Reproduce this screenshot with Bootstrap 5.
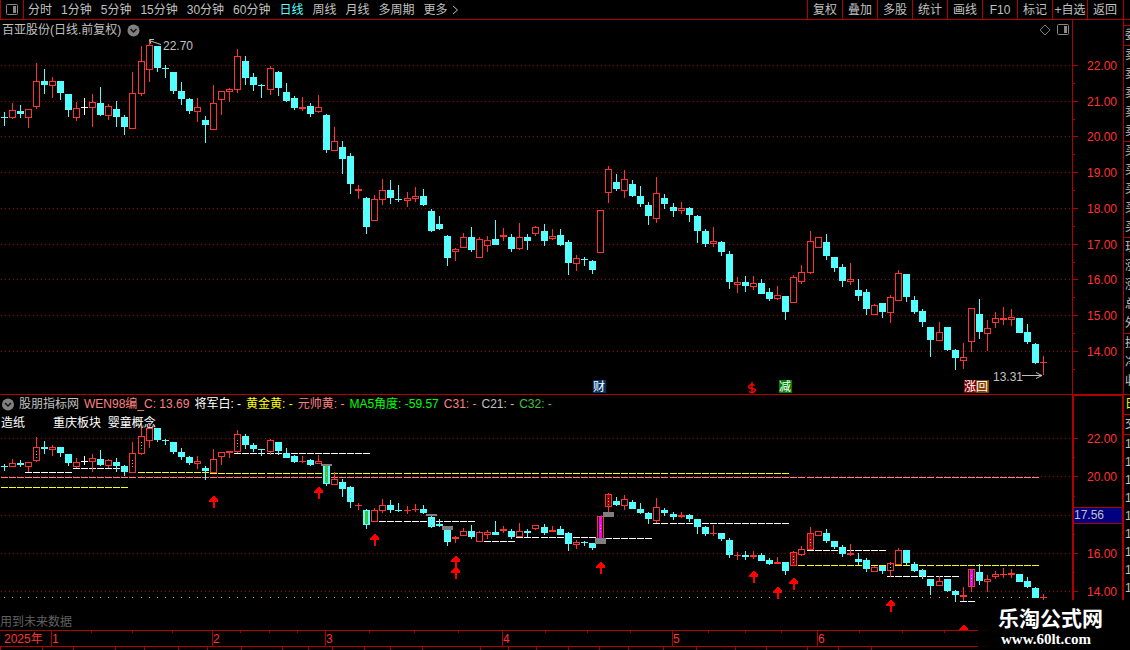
<!DOCTYPE html>
<html lang="zh-CN">
<head>
<meta charset="utf-8">
<meta name="viewport" content="width=device-width, initial-scale=1">
<title>百亚股份 日线</title>
<link href="https://cdn.jsdelivr.net/npm/bootstrap@5.3.0/dist/css/bootstrap.min.css" rel="stylesheet">
<style>
:root { --line: #b00000; --tick: #ff3232; --ink: #c0c0c0; }
body { background: #000; color: var(--ink); font: 12px/18px "Liberation Sans", "Noto Sans CJK SC", sans-serif; }
.toolbar { height: 20px; border-bottom: 1px solid var(--line); padding-right: 8px; }
.toolbar button { background: none; border: 0; padding: 0; color: inherit; line-height: 18px; white-space: nowrap; }
.toolbar .period { gap: 9px; }
.toolbar .period .current { color: #54ffff; }
.toolbar .tool { width: 35px; border-left: 1px solid var(--line); height: 19px; }
.toolbar .panes { width: 24px; height: 19px; border: solid var(--line); border-width: 0 1px; margin-right: 4px; }
.toolbar .panes svg, .pane-head svg { display: block; }
.plot { display: block; width: 100%; height: auto; }
.pane-head { top: 0; left: 0; right: 53px; height: 20px; padding-left: 2px; white-space: nowrap; }
.pane-head button { background: none; border: 0; padding: 0; }
.pane-head .toggle { margin-left: 6px; }
.readout { gap: 5px; }
.tags { top: 20px; left: 1px; white-space: nowrap; color: #fff; }
.tags .first { margin-right: 28px; }
.note { left: 0; bottom: 0; color: #606060; line-height: 16px; }
.strip { width: 7px; border-left: 1px solid var(--line); flex: none; padding-top: 25px; margin-top: -20px; }
.strip div { border-top: 1px solid var(--line); width: 7px; overflow: hidden; padding-left: 1px; }
.strip span { display: block; line-height: 19px; width: 12px; }
.strip .totals { height: 61px; }
.strip .bids span { line-height: 18px; }
.sitemark { right: 0; bottom: 0; width: 152px; height: 50px; background: #000; padding: 5px 0 0 20px; }
.sitemark .cn { font: 700 21px/25px "Noto Sans CJK SC", sans-serif; color: #fff; }
.sitemark .site { font: 700 15px/18px "Liberation Serif", serif; color: #fff; text-decoration: none; padding-left: 3px; }
.c-pink { color: #ff8080; } .c-yellow { color: #ff0; } .c-lime { color: #0f0; } .c-green { color: #40c040; } .c-white { color: #fff; }
svg text { font: 12px "Liberation Sans", "Noto Sans CJK SC", sans-serif; }
</style>
<script src="https://cdn.jsdelivr.net/npm/bootstrap@5.3.0/dist/js/bootstrap.bundle.min.js"></script>
</head>
<body>
<div class="position-relative overflow-hidden">
  <nav class="toolbar d-flex">
    <button class="panes d-flex align-items-center justify-content-center" aria-label="侧栏">
      <svg width="12" height="12"><rect x=".5" y=".5" width="11" height="10" rx="1" fill="none" stroke="#888"/><rect x="7" y="2" width="3" height="7" fill="#888"/></svg>
    </button>
    <div class="period d-flex flex-grow-1">
      <button>分时</button><button>1分钟</button><button>5分钟</button><button>15分钟</button><button>30分钟</button><button>60分钟</button><button class="current">日线</button><button>周线</button><button>月线</button><button>多周期</button><button class="d-flex align-items-center">更多<svg class="ms-1" width="7" height="10"><path d="M1 1L5.500 5L1 9" fill="none" stroke="#c0c0c0"/></svg></button>
    </div>
    <div class="d-flex flex-shrink-0">
      <button class="tool">复权</button><button class="tool">叠加</button><button class="tool">多股</button><button class="tool">统计</button><button class="tool">画线</button><button class="tool">F10</button><button class="tool">标记</button><button class="tool">+自选</button><button class="tool">返回</button>
    </div>
  </nav>
  <div class="d-flex">
    <main class="flex-grow-1">
      <section class="position-relative">
        <svg class="plot" id="price" viewBox="0 20 1123 374"></svg>
        <div class="pane-head position-absolute d-flex align-items-center">
          <span>百亚股份(日线.前复权)</span>
          <button class="toggle" aria-label="展开"><svg width="13" height="13"><circle cx="6.500" cy="6.500" r="6" fill="#808080"/><path d="M3.500 5L6.500 8L9.500 5" fill="none" stroke="#111" stroke-width="1.500"/></svg></button>
          <button class="ms-auto" aria-label="标记点"><svg width="12" height="12"><path d="M6 1L11 6L6 11L1 6Z" fill="none" stroke="#777"/></svg></button>
          <button class="toggle" aria-label="窗格"><svg width="13" height="12"><rect x=".5" y=".5" width="11" height="10" rx="1" fill="none" stroke="#888"/><rect x="7" y="2" width="3" height="7" fill="#888"/></svg></button>
        </div>
      </section>
      <section class="position-relative">
        <svg class="plot" id="signal" viewBox="0 394 1123 236"></svg>
        <div class="pane-head readout position-absolute d-flex align-items-center">
          <button aria-label="展开"><svg width="12" height="13"><circle cx="6" cy="6.500" r="6" fill="#808080"/><path d="M3 5L6 8L9 5" fill="none" stroke="#111" stroke-width="1.500"/></svg></button>
          <span>股朋指标网</span><span class="c-pink">WEN98编_C: 13.69</span><span class="c-white">将军白: -</span><span class="c-yellow">黄金黄: -</span><span class="c-pink">元帅黄: -</span><span class="c-lime">MA5角度: -59.57</span><span class="c-pink">C31: -</span><span>C21: -</span><span class="c-green">C32: -</span>
        </div>
        <div class="tags position-absolute"><span class="first">造纸</span><span>重庆板块</span>&nbsp; <span>婴童概念</span></div>
        <div class="note position-absolute">用到未来数据</div>
      </section>
      <svg class="plot" id="dates" viewBox="0 630 1123 20"></svg>
    </main>
    <aside class="strip">
      <div><span>委</span></div>
      <div><span>卖</span><span>卖</span><span>卖</span><span>卖</span><span>卖</span></div>
      <div><span>买</span><span>买</span><span>买</span><span>买</span><span>买</span></div>
      <div><span>现</span><span>涨</span><span>涨</span><span>总</span><span>外</span></div>
      <div class="totals"><span>换</span><span>净</span><span>收</span></div>
      <div class="c-yellow"><span>日</span></div>
      <div><span>交</span></div>
      <div class="bids"><span>1</span><span>1</span><span>1</span><span>1</span><span>1</span><span>1</span><span>1</span><span>1</span><span>1</span></div>
    </aside>
  </div>
  <div class="sitemark position-absolute">
    <div class="cn">乐淘公式网</div>
    <a class="site d-block" href="#">www.60lt.com</a>
  </div>
</div>
<script>
// Each candle: high, body top, body bottom, low (plot rows); u = up, d = down, w = flat.
const candles = `112 117 118 126 d,103 110 118 119 u,105 111 114 118 d,109 109 118 128 u,63 81 107 109 u,69 81 85 94 d,77 81 86 98 u,81 81 93 100 d,94 94 110 117 d,102 108 118 121 u,98 107 108 115 w,94 102 108 127 u,87 103 115 116 d,104 106 116 120 u,101 109 117 127 d,115 117 127 135 d,72 93 129 129 u,46 61 94 96 u,40 45 70 82 u,46 46 68 72 d,65 68 69 78 d,72 72 91 94 d,82 91 99 105 d,98 99 111 114 d,98 107 112 122 u,116 120 125 143 d,85 103 130 130 u,91 91 100 115 u,88 89 92 102 u,49 56 90 93 u,56 61 78 85 d,73 77 85 91 d,84 85 86 98 d,66 68 90 95 u,71 72 88 96 d,83 92 101 102 d,96 98 108 110 d,97 107 109 111 u,103 106 114 117 d,95 107 112 113 u,114 115 150 153 d,127 141 151 151 u,141 147 159 174 d,153 156 184 194 d,185 189 191 199 u,197 198 227 234 d,195 199 221 221 u,179 190 200 205 u,180 190 198 204 d,185 199 200 202 d,192 198 201 207 u,187 196 199 202 u,189 196 205 206 d,209 211 231 232 d,216 224 229 230 d,235 236 258 266 d,248 249 252 261 u,233 237 248 248 u,227 237 250 252 d,237 239 258 258 u,236 240 246 252 u,220 239 245 245 d,228 235 237 241 u,234 237 249 252 d,223 237 249 250 u,234 237 241 250 d,226 227 234 236 u,224 231 241 246 d,229 236 239 240 u,229 235 245 246 d,240 242 263 275 d,255 258 264 271 u,257 259 260 266 d,260 261 270 274 d,210 210 253 253 u,166 169 193 203 u,174 182 189 191 d,170 179 191 198 u,180 184 196 197 d,186 196 204 207 d,202 205 216 225 d,177 193 219 223 u,194 198 204 209 d,203 207 211 217 d,202 208 211 214 u,207 208 215 222 d,215 216 231 243 d,229 231 244 247 d,227 241 244 247 u,241 242 252 256 d,251 254 282 289 d,277 282 285 293 u,276 282 286 292 d,276 283 287 290 u,279 283 294 294 d,288 292 299 301 d,286 295 299 300 u,296 296 312 320 d,275 277 303 303 u,265 272 282 284 u,231 241 273 274 u,237 237 248 248 u,234 242 256 260 d,257 257 268 272 d,264 267 281 287 d,263 279 282 285 u,279 290 296 301 d,289 292 309 315 d,304 305 315 315 u,303 303 312 318 d,295 297 313 323 u,270 273 301 301 u,274 274 297 302 d,296 300 312 314 d,309 311 322 327 d,327 327 340 357 d,322 332 341 341 u,327 327 350 351 d,349 350 358 370 d,343 357 361 369 u,308 308 342 352 u,299 314 332 339 d,320 328 334 351 u,312 318 323 328 u,307 318 320 325 u,309 317 320 326 u,318 318 333 333 d,324 332 342 344 d,343 344 363 364 d,356 362 363 375 u`
  .split(',').map(s => { const p = s.split(' '); return [+p[0], +p[1], +p[2], +p[3], p[4]]; });
const X = i => Math.floor(4.03 + 8.0601 * i);
const rect = (x, y, w, h, c) => `<rect x="${x}" y="${y}" width="${w}" height="${h}" fill="${c}"/>`;
const label = (x, y, t, c) => `<text x="${x}" y="${y}" fill="${c}">${t}</text>`;
const G = '#b00000', R = '#ff3232', C = '#54ffff';

function grid(rows) {
  return rows.map(y => `<path d="M1 ${y}.5H1071" stroke="#a00000" stroke-dasharray="1 3"/>`).join('');
}
function series(map) {
  return candles.map(([h, t, b, l, k], i) => {
    [h, t, b, l] = [h, t, b, l].map(map);
    b = Math.max(b, t + 1); l = Math.max(l, b);
    const x = X(i), c = { u: R, d: C, w: '#fff' }[k];
    let s = rect(x, h, 1, l - h, c) + rect(x - 3, t, 7, b - t, c);
    if (k === 'u' && b - t > 2) s += rect(x - 2, t + 1, 5, b - t - 2, '#000');
    return s;
  }).join('');
}
const crisp = s => `<g shape-rendering="crispEdges">${s}</g>`;

// price pane
const priceRows = [65, 101, 136, 172, 208, 244, 279, 315, 351];
let s = grid(priceRows) + series(v => v) + rect(1072, 20, 1, 375, G) + rect(0, 394, 1123, 1, G);
priceRows.forEach(y => s += rect(1073, y, 5, 1, G) + rect(1073, y + 18, 2, 1, G));
s = crisp(s);
priceRows.forEach((y, i) => s += label(1087, y + 5, (22 - i) + '.00', R));
const badge = (x, t, bg) => rect(x, 380, 13, 13, bg) + label(x, 391, t, '#fff');
s += badge(593, '财', '#003366') + badge(779, '减', '#008000') + badge(964, '涨', '#800000') + badge(976, '回', '#804000');
s += `<path d="M754.500 385.500Q752 383 749.500 385.500T752 388.500T754.500 391.500Q752 394 749 391.500M752 382V393" fill="none" stroke="#f00" stroke-width="1.500"/>`;
s += label(163, 50, '22.70', '#c0c0c0') + label(993, 381, '13.31', '#c0c0c0');
s += '<path d="M161 44.500L149 40.500M154 39.500H149.500L151 44M1022 375.500H1042M1036 372.500L1042 375.500L1036 378.500" fill="none" stroke="#c0c0c0"/>';
document.getElementById('price').innerHTML = s;

// signal pane
const map = v => Math.round(438.5 + (v - 65) * 0.535);
s = grid([438, 476, 515, 553, 591]);
const levels = [['#fff', 25, 72, 472], ['#fff', 73, 120, 468], ['#ff0', 1, 128, 487], ['#ff0', 138, 209, 472], ['#ff0', 210, 789, 473], ['#fff', 234, 370, 453], ['#ff8080', 1, 1039, 477], ['#fff', 371, 475, 521], ['#fff', 484, 515, 541], ['#fff', 516, 596, 537], ['#fff', 605, 652, 538], ['#fff', 653, 789, 523], ['#fff', 807, 886, 550], ['#ff0', 798, 1039, 565], ['#fff', 887, 959, 576], ['#fff', 960, 978, 601]];
candles.forEach((_, i) => {
  const x = X(i);
  levels.forEach(([c, a, b, y]) => { if (x >= a && x <= b) s += rect(x - 3, y, 7, 1, c); });
  s += rect(x, 597, 1, 1, '#ff9080');
});
s += series(map);
[[321, 464, 2], [426, 514, 2], [442, 526, 4], [603, 512, 5], [595, 538, 6]].forEach(([x, y, h]) => s += rect(x, y, 11, h, '#808080'));
const core = (i, c) => rect(X(i) - 1, map(candles[i][1]) + 1, 3, map(candles[i][2]) - map(candles[i][1]) - 2, c);
[[40, '#40c040'], [45, '#40c040'], [74, '#f0f'], [120, '#f0f'], [75, '#b00000'], [98, '#b00000'], [100, '#b00000']].forEach(([i, c]) => s += core(i, c));
[4, 16, 17, 29, 40, 43, 53, 74, 75, 90, 98, 100, 110, 114, 120, 121].forEach(i => {
  const m = Math.round((map(candles[i][1]) + map(candles[i][2])) / 2);
  s += rect(X(i), m - 3, 1, 1, '#ff8080') + rect(X(i), m, 1, 1, '#c0c0c0') + rect(X(i), m + 3, 1, 1, '#40c040');
});
s += rect(1072, 394, 2, 236, G) + rect(1072, 394, 51, 2, G) + rect(1122, 394, 2, 236, G) + rect(0, 394, 1072, 1, G);
[438, 476, 553, 591].forEach(y => s += rect(1074, y, 4, 1, G));
[457, 496, 534, 572].forEach(y => s += rect(1074, y, 1, 1, G));
s += rect(1074, 507, 48, 17, G) + rect(1074, 508, 48, 15, '#000080');
[[213, 496], [318, 487], [374, 534], [455, 556], [455, 567], [600, 562], [753, 571], [777, 587], [793, 578], [890, 600], [963, 625]].forEach(([x, y]) =>
  s += `<path d="M${x} ${y}h1l4 4v2h-3v6h-2v-6h-4v-2z" fill="#f00"/>`);
s = crisp(s);
[[443, '22.00'], [481, '20.00'], [558, '16.00'], [596, '14.00']].forEach(([y, t]) => s += label(1087, y, t, R));
s += label(1074, 519, '17.56', '#c0c0c0');
document.getElementById('signal').innerHTML = s;

// time axis
s = rect(0, 630, 1123, 1, G) + rect(0, 646, 1123, 1, G);
[91, 132, 172, 240, 269, 297, 369, 414, 458, 545, 587, 630, 708, 745, 781, 859, 902, 944].forEach(x => s += rect(x, 631, 1, 2, G));
[0, 42, 73, 115, 144, 178, 207, 241, 282, 308, 332, 364, 390, 422, 480, 508, 536, 568, 599, 628, 663, 696, 735, 766, 807, 838, 871].forEach(x => s += rect(x, 647, 1, 3, G));
const months = [[51, 1], [212, 2], [325, 3], [502, 4], [672, 5], [817, 6]];
months.forEach(([x]) => s += rect(x, 631, 1, 15, G));
s = crisp(s) + label(4, 643, '2025年', R);
months.forEach(([x, m]) => s += label(x + 1, 643, m, R));
document.getElementById('dates').innerHTML = s;
</script>
</body>
</html>
